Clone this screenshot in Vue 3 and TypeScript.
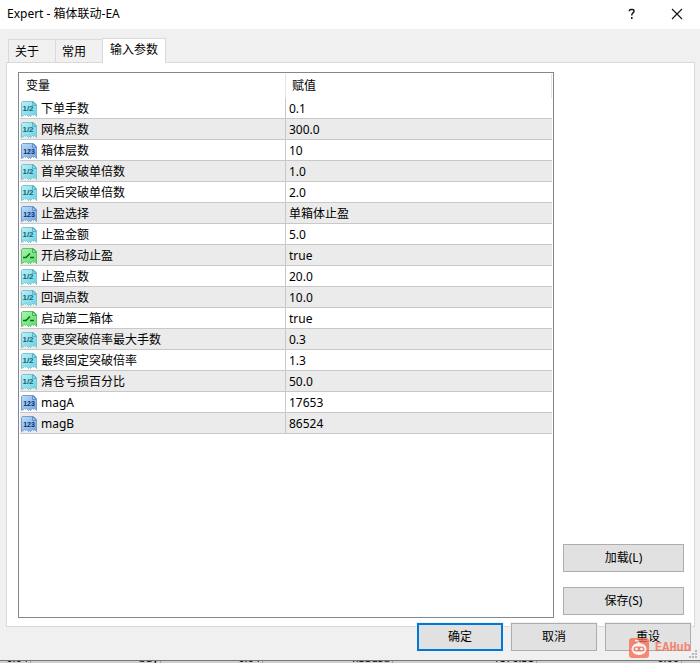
<script setup lang="ts">
import { ref } from 'vue'

type Kind = 'real' | 'int' | 'bool'
interface Param {
  kind: Kind
  name: string
  value: string
}

const tabs = ['关于', '常用', '输入参数']
const active = ref(2)

const params: Param[] = [
  { kind: 'real', name: '下单手数', value: '0.1' },
  { kind: 'real', name: '网格点数', value: '300.0' },
  { kind: 'int', name: '箱体层数', value: '10' },
  { kind: 'real', name: '首单突破单倍数', value: '1.0' },
  { kind: 'real', name: '以后突破单倍数', value: '2.0' },
  { kind: 'int', name: '止盈选择', value: '单箱体止盈' },
  { kind: 'real', name: '止盈金额', value: '5.0' },
  { kind: 'bool', name: '开启移动止盈', value: 'true' },
  { kind: 'real', name: '止盈点数', value: '20.0' },
  { kind: 'real', name: '回调点数', value: '10.0' },
  { kind: 'bool', name: '启动第二箱体', value: 'true' },
  { kind: 'real', name: '变更突破倍率最大手数', value: '0.3' },
  { kind: 'real', name: '最终固定突破倍率', value: '1.3' },
  { kind: 'real', name: '清仓亏损百分比', value: '50.0' },
  { kind: 'int', name: 'magA', value: '17653' },
  { kind: 'int', name: 'magB', value: '86524' },
]
</script>

<template>
  <div class="window">
    <header class="titlebar">
      <h1 class="title">Expert - 箱体联动-EA</h1>
      <button class="caption" type="button" aria-label="帮助">
        <svg width="10" height="12" viewBox="0 0 10 12">
          <path d="M2.5 3.2V2.5Q2.5 1.5 4 1.5H5.5Q7 1.5 7 3T5.5 5.2Q4.8 5.8 4.8 7.5M4.8 9V11" fill="none" stroke="#111" stroke-width="1.5" />
        </svg>
      </button>
      <button class="caption" type="button" aria-label="关闭">
        <svg width="12" height="12" viewBox="0 0 12 12">
          <path d="M1 1L11 11M11 1L1 11" fill="none" stroke="#111" stroke-width="1.1" />
        </svg>
      </button>
    </header>

    <main class="body">
      <nav class="tabs" role="tablist">
        <button
          v-for="(tab, i) in tabs"
          :key="tab"
          class="tab"
          :class="{ active: i === active }"
          type="button"
          role="tab"
          :aria-selected="i === active"
          @click="active = i"
        >{{ tab }}</button>
      </nav>

      <section class="panel">
        <div class="list">
          <table class="grid">
            <thead>
              <tr>
                <th>变量</th>
                <th>赋值</th>
              </tr>
            </thead>
            <tbody>
              <tr v-for="p in params" :key="p.name">
                <td>
                  <div class="name">
                    <svg class="icon" :class="p.kind" width="16" height="16" viewBox="0 0 16 16" aria-hidden="true">
                      <defs>
                        <linearGradient id="real-fill" x1="0" y1="0" x2="1" y2="1">
                          <stop offset="0" stop-color="#baf0f8" />
                          <stop offset="1" stop-color="#6fcfe0" />
                        </linearGradient>
                        <linearGradient id="int-fill" x1="0" y1="0" x2="1" y2="1">
                          <stop offset="0" stop-color="#bcdcfb" />
                          <stop offset="1" stop-color="#6fa4e0" />
                        </linearGradient>
                        <linearGradient id="bool-fill" x1="0" y1="0" x2="1" y2="1">
                          <stop offset="0" stop-color="#a9f5ac" />
                          <stop offset="1" stop-color="#5ddc6c" />
                        </linearGradient>
                      </defs>
                      <path class="sheet" d="M1.5 .5H12.5L15.5 3.5V15.5L14.5 14.5L13.5 13.5L12.5 14.5L11.5 13.5L10.5 14.5L9.5 15.5L8.5 14.5L7.5 15.5L6.5 14.5L5.5 13.5L4.5 14.5L3.5 13.5L2.5 14.5L.5 15.5V1.5Z" />
                      <path class="fold" d="M11.5 .5V4.5H15.5Z" />
                      <path v-if="p.kind === 'bool'" class="mark" d="M2 9.5H5L9 5.5M9 9.5H13" />
                      <text v-else-if="p.kind === 'int'" class="digits" x="8" y="11" text-anchor="middle">123</text>
                      <text v-else class="digits" x="7" y="10" text-anchor="middle">1/2</text>
                    </svg>
                    <span>{{ p.name }}</span>
                  </div>
                </td>
                <td>{{ p.value }}</td>
              </tr>
            </tbody>
          </table>
        </div>
        <div class="side">
          <button class="btn" type="button">加载(L)</button>
          <button class="btn" type="button">保存(S)</button>
        </div>
      </section>

      <footer class="actions">
        <button class="btn primary" type="button">确定</button>
        <button class="btn" type="button">取消</button>
        <button class="btn" type="button">重设</button>
      </footer>

      <div class="brand">
        <svg width="20" height="20" viewBox="0 0 20 20" aria-hidden="true">
          <rect width="20" height="20" rx="3" fill="#f9674b" />
          <path d="M6 2.5Q9.5 2 10 6" fill="none" stroke="#fff" stroke-width="1.5" />
          <ellipse cx="10" cy="11" rx="7.5" ry="6" fill="#fff" />
          <rect x="4.5" y="8.5" width="11" height="5" rx="2.5" fill="#f9674b" />
          <circle cx="7.5" cy="11" r="1.3" fill="#fff" />
          <circle cx="12.5" cy="11" r="1.3" fill="#fff" />
        </svg>
        <span>EAHub</span>
      </div>
      <svg class="grip" width="8" height="8" viewBox="0 0 8 8" aria-hidden="true">
        <path d="M6 0h2v2H6zM3 3h2v2H3zM6 3h2v2H6zM0 6h2v2H0zM3 6h2v2H3zM6 6h2v2H6z" fill="#b8b8b8" />
      </svg>
    </main>

    <div class="behind">
      <span>0.04</span><span>buy</span><span>0.04</span><span>xauusd</span><span>1876.38</span><span>0.00</span>
    </div>
  </div>
</template>

<style>
body {
  margin: 0;
}
</style>

<style scoped>
.window {
  display: flex;
  flex-direction: column;
  min-height: 100vh;
  background: #fff;
  color: #000;
  font: 12px/16px "Noto Sans", "Noto Sans CJK SC", sans-serif;
}
.window * {
  box-sizing: border-box;
}
button {
  font: inherit;
  color: inherit;
  padding: 0;
}
.titlebar {
  display: flex;
  align-items: center;
  height: 29px;
  padding: 0 1px 2px 7px;
}
.title {
  flex: 1;
  margin: 0;
  font: inherit;
}
.caption {
  display: flex;
  align-items: center;
  justify-content: center;
  width: 45px;
  height: 26px;
  border: 0;
  background: none;
}
.body {
  position: relative;
  flex: 1;
  display: flex;
  flex-direction: column;
  padding: 9px 5px 9px 6px;
  background: #f0f0f0;
}
.tabs {
  display: flex;
  align-items: flex-end;
  padding-left: 2px;
}
.tab {
  height: 23px;
  padding: 1px 16px 0 6px;
  border: 1px solid #d9d9d9;
  border-right: 0;
  border-bottom: 0;
  background: #f0f0f0;
}
.tab.active {
  position: relative;
  height: 25px;
  margin-bottom: -1px;
  padding: 0 7px 2px;
  border-right: 1px solid #d9d9d9;
  background: #fff;
}
.panel {
  flex: 1;
  display: flex;
  gap: 9px;
  padding: 9px 10px 8px 11px;
  border: 1px solid #d9d9d9;
  background: #fff;
}
.list {
  flex: 1;
  padding: 1px;
  border: 1px solid #828790;
}
.grid {
  width: 100%;
  table-layout: fixed;
  border-collapse: separate;
  border-spacing: 0;
}
th {
  height: 24px;
  padding: 0 6px 1px;
  border-right: 1px solid #e5e5e5;
  font-weight: normal;
  text-align: left;
}
td {
  height: 21px;
  padding: 2px 3px 0;
  border-bottom: 1px solid #c8c8c8;
}
td:first-child {
  padding: 2px 1px 0;
  border-right: 1px solid #c8c8c8;
}
tbody tr:nth-child(even) {
  background: #ebebeb;
}
.name {
  display: flex;
  align-items: center;
  gap: 4px;
}
.icon {
  flex: none;
}
.sheet {
  stroke-width: 1;
}
.real .sheet {
  fill: url(#real-fill);
  stroke: #76c6d3;
}
.int .sheet {
  fill: url(#int-fill);
  stroke: #729dcf;
}
.bool .sheet {
  fill: url(#bool-fill);
  stroke: #5cc068;
}
.real .fold {
  fill: #8edbe8;
  stroke: #5bb2c0;
}
.int .fold {
  fill: #9cc6f2;
  stroke: #6191c8;
}
.bool .fold {
  fill: #8ceb94;
  stroke: #46b056;
}
.mark {
  fill: none;
  stroke: #0b6b1c;
  stroke-width: 1.5;
}
.digits {
  font: bold 7px "Liberation Sans", sans-serif;
}
.real .digits {
  font-size: 8px;
  fill: #0e6878;
}
.int .digits {
  fill: #0b2d66;
}
.side {
  display: flex;
  flex-direction: column;
  justify-content: flex-end;
  gap: 15px;
  width: 121px;
  padding-bottom: 3px;
}
.btn {
  height: 28px;
  border: 1px solid #adadad;
  background: #e1e1e1;
}
.actions {
  position: relative;
  display: flex;
  justify-content: flex-end;
  gap: 8px;
  margin-top: -4px;
  padding-right: 4px;
}
.actions .btn {
  width: 86px;
  box-shadow: 0 0 0 1px #f0f0f0;
}
.actions .primary {
  border: 2px solid #0078d7;
}
.brand {
  position: absolute;
  right: 9px;
  bottom: 2px;
  display: flex;
  align-items: center;
  gap: 6px;
  color: #f9674b;
  font: bold 12px/20px "Liberation Mono", monospace;
  opacity: 0.75;
  pointer-events: none;
}
.grip {
  position: absolute;
  right: 3px;
  bottom: 2px;
}
.behind {
  display: grid;
  grid-template-columns: 31fr 130fr 102fr 130fr 144fr 145fr 18fr;
  align-content: end;
  height: 3px;
  overflow: hidden;
  border-top: 1px solid #777;
  background: #d0d0d0;
  font-size: 11px;
  line-height: 10px;
  text-align: right;
}
.behind span {
  padding-right: 2px;
  border-right: 1px solid #a0a0a0;
}
</style>
